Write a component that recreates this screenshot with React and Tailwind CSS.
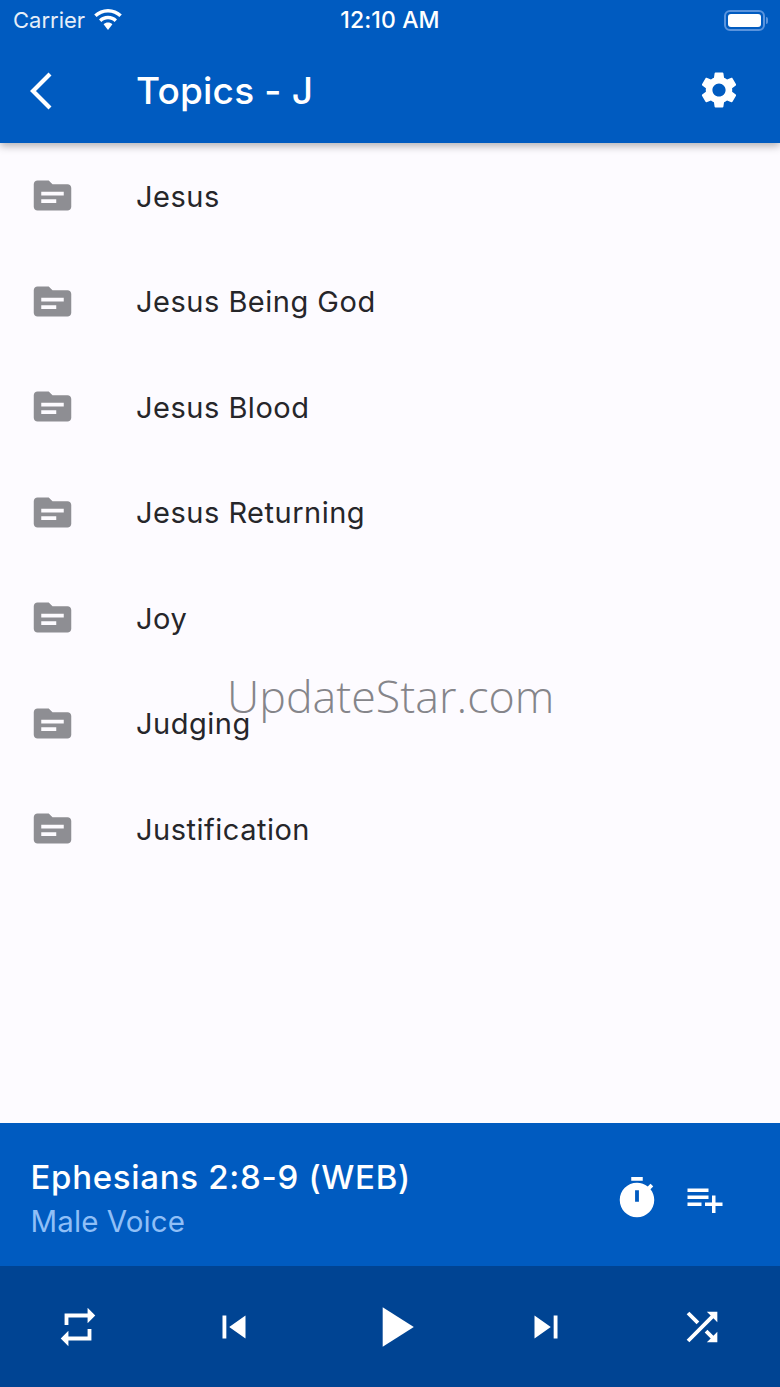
import React from "react";

const topics = ["Jesus", "Jesus Being God", "Jesus Blood", "Jesus Returning", "Joy", "Judging", "Justification"];

const paths = {
  topic: "M20 6h-8l-2-2H4c-1.1 0-1.99.9-1.99 2L2 18c0 1.1.9 2 2 2h16c1.1 0 2-.9 2-2V8c0-1.1-.9-2-2-2zm-6 10H6v-2h8v2zm4-4H6v-2h12v2z",
  settings: "M19.14 12.94c.04-.3.06-.61.06-.94 0-.32-.02-.64-.07-.94l2.03-1.58c.18-.14.23-.41.12-.61l-1.92-3.32c-.12-.22-.37-.29-.59-.22l-2.39.96c-.5-.38-1.03-.7-1.62-.94l-.36-2.54c-.04-.24-.24-.41-.48-.41h-3.84c-.24 0-.43.17-.47.41l-.36 2.54c-.59.24-1.13.57-1.62.94l-2.39-.96c-.22-.08-.47 0-.59.22L2.74 8.87c-.12.21-.08.47.12.61l2.03 1.58c-.05.3-.09.63-.09.94s.02.64.07.94l-2.03 1.58c-.18.14-.23.41-.12.61l1.92 3.32c.12.22.37.29.59.22l2.39-.96c.5.38 1.03.7 1.62.94l.36 2.54c.05.24.24.41.48.41h3.84c.24 0 .44-.17.47-.41l.36-2.54c.59-.24 1.13-.56 1.62-.94l2.39.96c.22.08.47 0 .59-.22l1.92-3.32c.12-.22.07-.47-.12-.61l-2.01-1.58zM12 15.6c-1.98 0-3.6-1.62-3.6-3.6s1.62-3.6 3.6-3.6 3.6 1.62 3.6 3.6-1.62 3.6-3.6 3.6z",
  timer: "M15 1H9v2h6V1zm4.03 6.39l1.42-1.42c-.43-.51-.9-.99-1.41-1.41l-1.42 1.42C16.07 4.74 14.12 4 12 4c-4.97 0-9 4.03-9 9s4.02 9 9 9 9-4.03 9-9c0-2.12-.74-4.07-1.97-5.61zM13 14h-2V8h2v6z",
  playlistAdd: "M14 10H2v2h12v-2zm0-4H2v2h12V6zm4 8v-4h-2v4h-4v2h4v4h2v-4h4v-2h-4zM2 16h8v-2H2v2z",
  repeat: "M7 7h10v3l4-4-4-4v3H5v6h2V7zm10 10H7v-3l-4 4 4 4v-3h12v-6h-2v4z",
  prev: "M6 6h2v12H6zm3.5 6l8.5 6V6z",
  play: "M8 5v14l11-7z",
  next: "M6 18l8.5-6L6 6v12zM16 6v12h2V6h-2z",
  shuffle: "M10.59 9.17L5.41 4 4 5.41l5.17 5.17 1.42-1.41zM14.5 4l2.04 2.04L4 18.59 5.41 20 17.96 7.46 20 9.5V4h-5.5zm.33 9.41l-1.41 1.41 3.13 3.13L14.5 20H20v-5.5l-2.04 2.04-3.13-3.13z",
};

function Icon({ name, className }) {
  return (
    <svg viewBox="0 0 24 24" fill="currentColor" fillRule="evenodd" className={className}>
      <path d={paths[name]} />
    </svg>
  );
}

function StatusBar() {
  return (
    <div className="relative flex h-10 items-center justify-between pl-[13px] pr-[12px] text-[22px] text-white">
      <div className="flex items-center gap-[9px]">
        <span className="opacity-90">Carrier</span>
        <svg viewBox="0 0 28 21" className="mb-[2px] h-[21px] w-[28px]" fill="white">
          <path d="M14 0C8.600 0 3.800 2.100.2 5.600l2.400 2.500C5.500 5.200 9.500 3.500 14 3.500s8.500 1.700 11.400 4.600l2.400-2.500C24.200 2.100 19.400 0 14 0z" />
          <path d="M14 6.800c-3.500 0-6.700 1.400-9 3.600l2.400 2.500c1.700-1.700 4-2.700 6.600-2.700s4.900 1 6.600 2.700l2.400-2.500c-2.300-2.200-5.500-3.600-9-3.600z" />
          <path d="M14 13.600c-1.700 0-3.200.6-4.400 1.700L14 21l4.400-5.700c-1.200-1.100-2.700-1.700-4.400-1.700z" />
        </svg>
      </div>
      <span className="absolute left-0 right-0 text-center text-[23px] font-medium tracking-[0.1px]">12:10 AM</span>
      <div className="flex items-center">
        <div className="h-[21px] w-[41px] rounded-[6px] border-2 border-[#5a94dd] p-[2px]">
          <div className="h-full w-full rounded-[3px] bg-white" />
        </div>
        <div className="ml-[1px] h-[7px] w-[2px] rounded-r-full bg-[#5a94dd]" />
      </div>
    </div>
  );
}

function Header() {
  return (
    <header className="relative z-10 h-[143px] shrink-0 bg-[#005bc0] shadow-[0_3px_8px_rgba(0,0,0,0.3)]">
      <StatusBar />
      <div className="flex h-[101px] items-center pr-[39px] text-white">
        <div className="flex w-[136px] pl-[26px]">
          <svg viewBox="0 0 30 40" className="h-[40px] w-[30px]" fill="none" stroke="white" strokeWidth="4.200">
            <path d="M24 3 L7 20 L24 37" />
          </svg>
        </div>
        <h1 className="flex-1 text-[37px] font-medium tracking-[0.2px]">Topics - J</h1>
        <Icon name="settings" className="mb-[1px] h-[44px] w-[44px]" />
      </div>
    </header>
  );
}

function TopicRow({ title }) {
  return (
    <div className="flex h-[105.500px] items-center">
      <div className="flex w-[136px] pl-[30px]">
        <Icon name="topic" className="mb-[1px] h-[45px] w-[45px] text-[#8e8e93]" />
      </div>
      <span className="text-[29px] tracking-[0.5px] text-[#26262a]">{title}</span>
    </div>
  );
}

function NowPlaying() {
  return (
    <div className="flex h-[143px] shrink-0 items-center bg-[#005bc0] pl-[30.500px] pr-[54px] pt-[10px]">
      <div className="flex-1">
        <div className="mt-[-1px] text-[33px] font-medium leading-[44px] tracking-[0.7px] text-white">Ephesians 2:8-9 (WEB)</div>
        <div className="text-[29.500px] leading-[45px] tracking-[0.1px] text-[#8fbff7]">Male Voice</div>
      </div>
      <div className="mb-[4px] flex items-center gap-[24px] text-white">
        <Icon name="timer" className="h-[46px] w-[46px]" />
        <Icon name="playlistAdd" className="mt-[3px] h-[42px] w-[42px]" />
      </div>
    </div>
  );
}

function Controls() {
  return (
    <div className="grid h-[121px] shrink-0 grid-cols-5 bg-[#004493] text-white">
      <div className="flex items-center justify-center"><Icon name="repeat" className="h-[46px] w-[46px]" /></div>
      <div className="flex items-center justify-center"><Icon name="prev" className="h-[46px] w-[46px]" /></div>
      <div className="flex items-center justify-center"><Icon name="play" className="ml-[8px] h-[68px] w-[68px]" /></div>
      <div className="flex items-center justify-center"><Icon name="next" className="h-[46px] w-[46px]" /></div>
      <div className="flex items-center justify-center"><Icon name="shuffle" className="h-[46px] w-[46px]" /></div>
    </div>
  );
}

export default function App() {
  return (
    <div className="relative flex h-[1387px] w-[780px] flex-col overflow-hidden bg-[#fdfbff] font-['Inter',sans-serif]">
      <Header />
      <main className="flex-1 pt-[0.600px]">
        {topics.map((t) => (
          <TopicRow key={t} title={t} />
        ))}
      </main>
      <NowPlaying />
      <Controls />
      {/* site stamp laid across the list */}
      <div className="absolute left-[227px] top-[666px] font-['Open_Sans',sans-serif] text-[44.800px] font-light leading-[60px] text-[#85858a]">
        UpdateStar.com
      </div>
    </div>
  );
}
